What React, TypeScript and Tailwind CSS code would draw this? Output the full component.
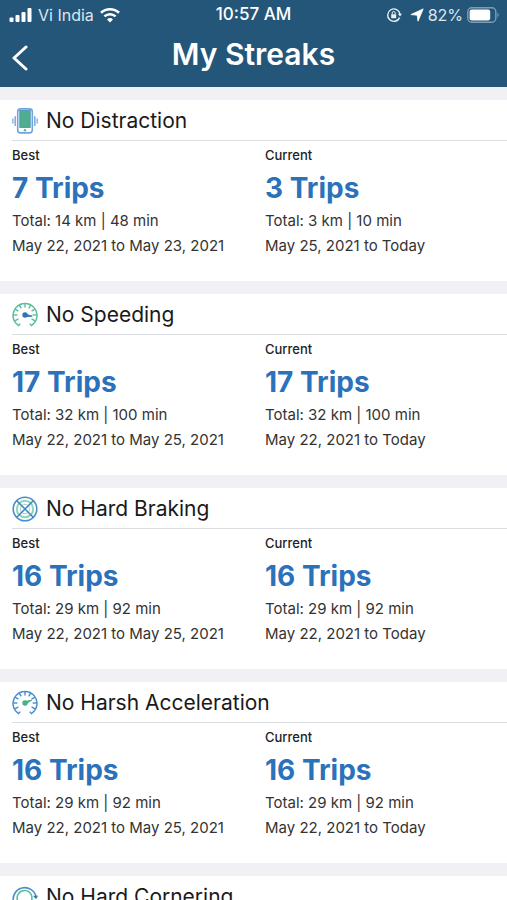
import type { ReactNode } from "react";

const BLUE = "#4a8fcb";
const GREEN = "#5bbd9f";

function PhoneIcon() {
  return (
    <svg viewBox="0 0 26 26" className="size-[26px] shrink-0" fill="none" aria-hidden="true">
      <rect x="5.7" y="0.9" width="14.6" height="24" rx="2.8" fill="#fff" stroke="#6fa5da" strokeWidth="1.6" />
      <rect x="7.8" y="2.4" width="10.4" height="17" fill="#4fae8f" stroke="#4c93b5" strokeWidth="0.9" />
      <circle cx="13" cy="22.2" r="1.3" fill={GREEN} />
      <path d="M3.2 8.6v8.8M22.8 8.6v8.8" stroke="#6fa5da" strokeWidth="1.4" strokeLinecap="round" />
      <path d="M0.9 11v4M25.1 11v4" stroke="#79ace0" strokeWidth="1.3" strokeLinecap="round" />
    </svg>
  );
}

function GaugeIcon({ ring, needle, tip }: { ring: string; needle: string; tip: string }) {
  const ticks = [-120, -90, -60, -30, 0, 30, 60, 90, 120];
  return (
    <svg viewBox="0 0 26 26" className="size-[26px] shrink-0" fill="none" aria-hidden="true">
      <path d="M8.2 21.6L6.6 23.6A12 12 0 1 1 19.4 23.6L17.8 21.6" stroke={ring} strokeWidth="1.5" />
      {ticks.map((a) => (
        <path key={a} d="M13 1.4v4" stroke={ring} strokeWidth="1.4" transform={`rotate(${a} 13 13)`} />
      ))}
      <circle cx="13" cy="13" r="2.7" fill={needle} />
      <path d={tip} fill={needle} stroke={needle} strokeWidth="0.9" strokeLinejoin="round" />
    </svg>
  );
}

function BrakeIcon() {
  return (
    <svg viewBox="0 0 26 26" className="size-[26px] shrink-0" fill="none" aria-hidden="true">
      <circle cx="13" cy="13" r="8.2" stroke="#8fd3bd" strokeWidth="2" />
      <circle cx="13" cy="13" r="4.6" stroke="#a9decd" strokeWidth="1.2" />
      <circle cx="13" cy="13" r="11.8" stroke={BLUE} strokeWidth="1.6" />
      <path d="M4.8 4.8l16.4 16.4M21.2 4.8L4.8 21.2" stroke="#3f83bd" strokeWidth="1.5" />
    </svg>
  );
}

function CornerIcon() {
  return (
    <svg viewBox="0 0 26 26" className="size-[26px] shrink-0" fill="none" aria-hidden="true">
      <path d="M1.5 18A11.5 11.5 0 1 1 24 12.5" stroke={BLUE} strokeWidth="1.6" />
      <path d="M21 11.8h5l-2 3.4z" fill="#3478b8" />
      <path d="M5.6 16.5A7.4 7.4 0 1 1 19 17.5" stroke={GREEN} strokeWidth="1.6" />
    </svg>
  );
}

interface Run {
  trips: string;
  total: string;
  dates: string;
}

interface Streak {
  title: string;
  icon: ReactNode;
  best: Run;
  current: Run;
}

function sameRun(trips: string, total: string): { best: Run; current: Run } {
  return {
    best: { trips, total, dates: "May 22, 2021 to May 25, 2021" },
    current: { trips, total, dates: "May 22, 2021 to Today" },
  };
}

const streaks: Streak[] = [
  {
    title: "No Distraction",
    icon: <PhoneIcon />,
    best: { trips: "7 Trips", total: "Total: 14 km | 48 min", dates: "May 22, 2021 to May 23, 2021" },
    current: { trips: "3 Trips", total: "Total: 3 km | 10 min", dates: "May 25, 2021 to Today" },
  },
  {
    title: "No Speeding",
    icon: <GaugeIcon ring={GREEN} needle="#2f74b8" tip="M13 12l7.2 2.2L13 14.6z" />,
    ...sameRun("17 Trips", "Total: 32 km | 100 min"),
  },
  {
    title: "No Hard Braking",
    icon: <BrakeIcon />,
    ...sameRun("16 Trips", "Total: 29 km | 92 min"),
  },
  {
    title: "No Harsh Acceleration",
    icon: <GaugeIcon ring={BLUE} needle="#48ae8c" tip="M13 11.6l7-1.6-6.4 4z" />,
    ...sameRun("16 Trips", "Total: 29 km | 92 min"),
  },
  {
    title: "No Hard Cornering",
    icon: <CornerIcon />,
    ...sameRun("16 Trips", "Total: 29 km | 92 min"),
  },
];

function RunColumn({ label, run }: { label: string; run: Run }) {
  return (
    <div>
      <h3 className="text-[13px] leading-5 font-medium text-[#222]">{label}</h3>
      <p className="pt-[3px] text-[28px] leading-10 font-bold text-[#2b72bb]">{run.trips}</p>
      <p className="text-[15px] leading-[25px] text-[#333]">{run.total}</p>
      <p className="text-[15px] leading-[25px] text-[#333]">{run.dates}</p>
    </div>
  );
}

function StreakCard({ streak }: { streak: Streak }) {
  return (
    <section className="bg-white pb-[23px] pl-3">
      <div className="flex h-[41px] items-center gap-2 border-b border-[#dcdde2] pt-0.5">
        {streak.icon}
        <h2 className="text-[21px] leading-7 text-[#1a1a1a]">{streak.title}</h2>
      </div>
      <div className="grid grid-cols-[253fr_242fr] pt-1">
        <RunColumn label="Best" run={streak.best} />
        <RunColumn label="Current" run={streak.current} />
      </div>
    </section>
  );
}

function StatusBar() {
  return (
    <div className="grid h-[30px] grid-cols-[1fr_auto_1fr] items-center px-2 text-base">
      <div className="flex items-center gap-1.5">
        <svg viewBox="0 0 24 16" className="h-4 w-6" fill="#fff" aria-hidden="true">
          <rect x="1.5" y="10.5" width="4" height="4.5" rx="1" />
          <rect x="7.5" y="8" width="4" height="7" rx="1" />
          <rect x="13.5" y="5" width="4" height="10" rx="1" />
          <rect x="19.5" y="1" width="4" height="14" rx="1" />
        </svg>
        <span className="text-[#dce6ee]">Vi India</span>
        <svg viewBox="0 0 20 16" className="h-4 w-5" fill="none" stroke="#fff" aria-hidden="true">
          <path d="M1 5.8a13 13 0 0 1 18 0" strokeWidth="2.6" />
          <path d="M4.4 9.4a8.2 8.2 0 0 1 11.2 0" strokeWidth="2.4" />
          <path d="M10 15.4l-3-3a4.4 4.4 0 0 1 6 0z" fill="#fff" stroke="none" />
        </svg>
      </div>
      <span className="text-[17px] font-medium">10:57 AM</span>
      <div className="flex items-center justify-end gap-1">
        <svg viewBox="0 0 16 16" className="mr-1 size-4" fill="none" stroke="#e9f0f5" aria-hidden="true">
          <path d="M13.6 10.6A6.2 6.2 0 1 1 14 7" strokeWidth="1.4" />
          <path d="M11.8 6.8h4.2l-2 2.8z" fill="#e9f0f5" stroke="none" />
          <rect x="5.2" y="7.2" width="5" height="4" rx="0.6" fill="#e9f0f5" stroke="none" />
          <path d="M6.2 7.4V6a1.5 1.5 0 0 1 3 0v1.4" strokeWidth="1" />
        </svg>
        <svg viewBox="0 0 14 14" className="size-3.5" fill="#fff" stroke="#fff" strokeWidth="0.8" strokeLinejoin="round" aria-hidden="true">
          <path d="M13.2.9L8 13.2 7.2 7.2.9 6.6z" />
        </svg>
        <span className="text-[#dce6ee]">82%</span>
        <svg viewBox="0 0 32 16" className="h-4 w-8" fill="none" aria-hidden="true">
          <rect x="0.8" y="0.8" width="28" height="14.4" rx="4" stroke="#7e9db5" strokeWidth="1.4" />
          <rect x="2.6" y="2.6" width="20.6" height="10.8" rx="2.2" fill="#fff" />
          <path d="M30.4 5.6c1.6.8 1.6 4 0 4.8z" fill="#7e9db5" />
        </svg>
      </div>
    </div>
  );
}

export default function App() {
  return (
    <div className="flex h-screen flex-col bg-[#f0f0f5] font-['Inter','Liberation_Sans',sans-serif]">
      <header className="shrink-0 bg-[#245679] text-white">
        <StatusBar />
        <div className="grid h-[57px] grid-cols-[48px_1fr_48px] items-start">
          <button type="button" aria-label="Back" className="flex h-14 items-center pl-3">
            <svg viewBox="0 0 16 26" className="h-[26px] w-4" fill="none" stroke="#fff" strokeWidth="3" strokeLinecap="round" strokeLinejoin="round" aria-hidden="true">
              <path d="M14 2L2 13l12 11" />
            </svg>
          </button>
          <h1 className="pt-1 text-center text-[30px] leading-10 font-semibold">My Streaks</h1>
        </div>
      </header>
      <main className="flex min-h-0 flex-1 flex-col gap-[13px] overflow-y-auto pt-[13px] [scrollbar-width:none]">
        {streaks.map((streak) => (
          <StreakCard key={streak.title} streak={streak} />
        ))}
      </main>
    </div>
  );
}
